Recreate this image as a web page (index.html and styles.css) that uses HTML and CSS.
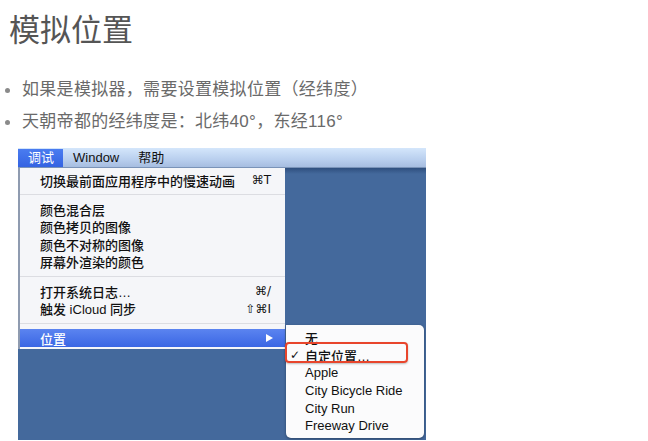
FILE: index.html
```html
<!DOCTYPE html>
<html lang="zh-CN">
<head>
<meta charset="utf-8">
<title>模拟位置</title>
<link rel="stylesheet" href="styles.css">
</head>
<body>
<h1 class="title">模拟位置</h1>
<ul class="bullets">
  <li><span class="dot"></span>如果是模拟器，需要设置模拟位置（经纬度）</li>
  <li><span class="dot"></span>天朝帝都的经纬度是：北纬40°，东经116°</li>
</ul>
<div class="shot">
  <div class="menubar">
    <span class="mb-item active">调试</span>
    <span class="mb-item">Window</span>
    <span class="mb-item">帮助</span>
  </div>
  <div class="desk">
    <div class="menu">
      <div class="row"><span>切换最前面应用程序中的慢速动画</span><span class="key">⌘T</span></div>
      <div class="sep"></div>
      <div class="row"><span>颜色混合层</span></div>
      <div class="row"><span>颜色拷贝的图像</span></div>
      <div class="row"><span>颜色不对称的图像</span></div>
      <div class="row"><span>屏幕外渲染的颜色</span></div>
      <div class="sep"></div>
      <div class="row"><span>打开系统日志…</span><span class="key">⌘/</span></div>
      <div class="row"><span>触发 iCloud 同步</span><span class="key">⇧⌘I</span></div>
      <div class="sep"></div>
      <div class="row sel"><span>位置</span><span class="arrow"></span></div>
    </div>
    <div class="submenu">
      <div class="srow"><span class="check"></span>无</div>
      <div class="srow"><span class="check">✓</span>自定位置…</div>
      <div class="srow"><span class="check"></span>Apple</div>
      <div class="srow"><span class="check"></span>City Bicycle Ride</div>
      <div class="srow"><span class="check"></span>City Run</div>
      <div class="srow"><span class="check"></span>Freeway Drive</div>
      <div class="redbox"></div>
    </div>
  </div>
</div>
</body>
</html>
```

FILE: styles.css
```css
html, body {
  margin: 0;
  padding: 0;
  background: #ffffff;
}

body {
  font-family: "Liberation Sans", "Noto Sans CJK SC", sans-serif;
}

.title {
  margin: 0;
  padding: 10px 0 0 9px;
  font-family: "Noto Sans CJK SC", sans-serif;
  font-weight: 400;
  font-size: 31px;
  line-height: 36px;
  color: #555555;
}

.bullets {
  list-style: none;
  margin: 32px 0 0 0;
  padding: 0;
  font-family: "Liberation Sans", "Noto Sans CJK SC", sans-serif;
  font-size: 17px;
  letter-spacing: 0.3px;
  color: #6a6a6a;
}

.bullets li {
  display: flex;
  align-items: center;
  height: 24px;
  line-height: 24px;
  margin-bottom: 8px;
}

.dot {
  width: 5px;
  height: 5px;
  border-radius: 50%;
  background: #8a8a8a;
  margin: 0 12px 0 5px;
  flex: none;
}

.shot {
  margin: 14px 0 0 18px;
  width: 408px;
  height: 292px;
  display: flex;
  flex-direction: column;
  background: #44699c;
  font-family: "Liberation Sans", "Noto Sans CJK SC", sans-serif;
  font-size: 13px;
  color: #111111;
  overflow: hidden;
}

.menubar {
  height: 20px;
  flex: none;
  display: flex;
  align-items: stretch;
  background: linear-gradient(#d4e6fb, #b9cfee 60%, #a6bde0);
  border-bottom: 1px solid #7a93b8;
  box-sizing: border-box;
}

.mb-item {
  display: flex;
  align-items: center;
  padding: 0 9px 0 10px;
  line-height: 18px;
}

.mb-item.active {
  background: linear-gradient(#4a7cf0, #3463e2);
  color: #ffffff;
  padding: 0 9px 0 10px;
  margin-top: 1px;
}

.desk {
  position: relative;
  flex: 1;
  background: linear-gradient(#2f4f7e, #44699c 6px);
}

.menu {
  position: absolute;
  left: 0;
  top: 0;
  width: 267px;
  padding: 3.5px 0 2px 0;
  background: #f5f6f9;
  border-left: 2px solid #8f9bb0;
  box-sizing: border-box;
  font-weight: 500;
}

.row {
  display: flex;
  justify-content: space-between;
  align-items: center;
  height: 17.4px;
  padding: 0 14px 0 20px;
}

.key {
  font-family: "DejaVu Sans", sans-serif;
  font-size: 12px;
}

.sep {
  height: 12px;
  display: flex;
  align-items: center;
}

.sep::after {
  content: "";
  display: block;
  width: 100%;
  height: 1px;
  background: #dcdde2;
}

.row.sel {
  height: 18px;
  background: linear-gradient(#5b84f0, #3a66e4);
  color: #ffffff;
}

.arrow {
  width: 0;
  height: 0;
  border-top: 4.5px solid transparent;
  border-bottom: 4.5px solid transparent;
  border-left: 7px solid #ffffff;
  margin-right: -2px;
}

.submenu {
  position: absolute;
  left: 268px;
  top: 157px;
  width: 138px;
  height: 113px;
  box-sizing: border-box;
  padding-top: 4px;
  background: #fbfbfc;
  border-radius: 0 5px 5px 5px;
  box-shadow: 0 1px 3px rgba(0, 0, 0, 0.35);
  font-weight: 500;
}

.srow {
  display: flex;
  align-items: center;
  height: 17.6px;
  padding-left: 4px;
}

.check {
  width: 15px;
  flex: none;
  font-family: "DejaVu Sans", sans-serif;
  font-size: 12px;
}

.redbox {
  position: absolute;
  left: -1px;
  top: 17px;
  width: 123px;
  height: 21px;
  box-sizing: border-box;
  border: 2.5px solid #e8452c;
  border-radius: 4px;
  box-shadow: 0 1px 2px rgba(0, 0, 0, 0.25);
}
```
